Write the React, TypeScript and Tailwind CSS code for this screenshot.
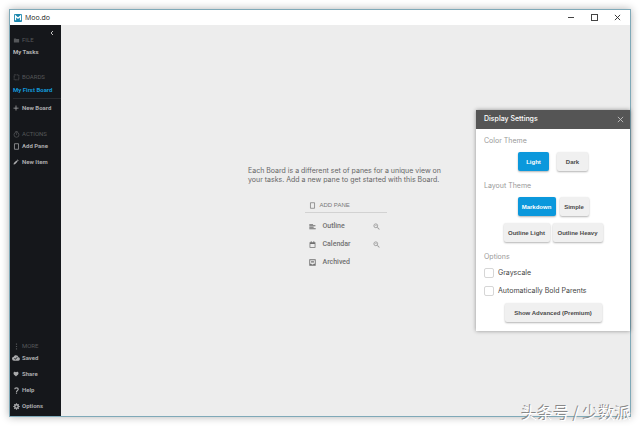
import type { ReactNode } from "react";

type IconProps = { className?: string };

const Svg = ({ className = "", children }: IconProps & { children: ReactNode }) => (
  <svg viewBox="0 0 24 24" aria-hidden="true" className={`shrink-0 ${className}`} fill="currentColor">
    {children}
  </svg>
);

const FolderIcon = ({ className }: IconProps) => (
  <Svg className={className}><path d="M3 5h7l2 2h9v12H3z" /></Svg>
);
const PaneIcon = ({ className }: IconProps) => (
  <Svg className={className}><path fill="none" stroke="currentColor" strokeWidth="2.5" d="M5 2.5h14v19H5z" /></Svg>
);
const BoardIcon = ({ className }: IconProps) => (
  <Svg className={className}>
    <path fill="none" stroke="currentColor" strokeWidth="2.5" strokeDasharray="6 2" d="M4 3h16v17H4z" />
  </Svg>
);
const PlusIcon = ({ className }: IconProps) => (
  <Svg className={className}><path d="M10.5 2h3v8.500H22v3h-8.500V22h-3v-8.500H2v-3h8.500z" /></Svg>
);
const ClockIcon = ({ className }: IconProps) => (
  <Svg className={className}>
    <circle cx="12" cy="13" r="8.500" fill="none" stroke="currentColor" strokeWidth="2.500" />
    <path d="M8 1h8v2H8zM11 7h2v7h-2z" />
  </Svg>
);
const PencilIcon = ({ className }: IconProps) => (
  <Svg className={className}><path d="M2 22l1.500-6L14 5.500l4.500 4.500L8 20.500zM15.500 4L18 1.500 22.500 6 20 8.500z" /></Svg>
);
const MoreIcon = ({ className }: IconProps) => (
  <Svg className={className}><path d="M10 2h4v4h-4zM10 10h4v4h-4zM10 18h4v4h-4z" /></Svg>
);
const CloudIcon = ({ className }: IconProps) => (
  <Svg className={className}>
    <path d="M19.350 10.040A7.490 7.490 0 0 0 12 4C9.110 4 6.600 5.640 5.350 8.040A6 6 0 0 0 6 20h13a5 5 0 0 0 .35-9.960zM10 17l-3.500-3.500 1.410-1.410L10 14.170l5.180-5.170 1.410 1.410z" />
  </Svg>
);
const HeartIcon = ({ className }: IconProps) => (
  <Svg className={className}>
    <path d="M12 21.500l-1.500-1.300C5 15.300 2 12.500 2 8.500 2 5.400 4.400 3 7.500 3c1.700 0 3.400.8 4.500 2.100C13.100 3.800 14.800 3 16.500 3 19.600 3 22 5.400 22 8.500c0 4-3 6.800-8.500 11.700z" />
  </Svg>
);
const HelpIcon = ({ className }: IconProps) => (
  <Svg className={className}>
    <path fill="none" stroke="currentColor" strokeWidth="4" d="M6 8c0-7 12-7 12 0 0 4-6 4-6 9" />
    <path d="M10 19h4v4h-4z" />
  </Svg>
);
const GearIcon = ({ className }: IconProps) => (
  <Svg className={className}>
    <circle cx="12" cy="12" r="6" fill="none" stroke="currentColor" strokeWidth="5" />
    <path d="M10 1h4v5h-4zM10 18h4v5h-4zM1 10h5v4H1zM18 10h5v4h-5zM3 6l3-3 3 3-3 3zM15 6l3-3 3 3-3 3zM3 18l3-3 3 3-3 3zM15 18l3-3 3 3-3 3z" />
  </Svg>
);
const OutlineIcon = ({ className }: IconProps) => (
  <Svg className={className}><path d="M1 3h13v3H1zM1 8h21v3H1zM1 13h15v3H1zM1 18h22v3H1z" /></Svg>
);
const CalendarIcon = ({ className }: IconProps) => (
  <Svg className={className}>
    <path fillRule="evenodd" d="M2 4h4V1h3v3h6V1h3v3h4v19H2zm2.500 6v10.500h15V10z" />
  </Svg>
);
const ArchiveIcon = ({ className }: IconProps) => (
  <Svg className={className}>
    <path fillRule="evenodd" d="M1 1h22v22H1zm3 3v12h4l2 3h4l2-3h4V4zM7 7h10v2H7zM7 11h10v2H7z" />
  </Svg>
);
const ZoomIcon = ({ className }: IconProps) => (
  <Svg className={className}>
    <circle cx="9.500" cy="9.500" r="6.500" fill="none" stroke="currentColor" strokeWidth="3" />
    <path d="M14 16l2-2 7 7-2 2zM6 8.500h7v2H6z" />
  </Svg>
);
const CloseIcon = ({ className }: IconProps) => (
  <Svg className={className}><path fill="none" stroke="currentColor" strokeWidth="3" d="M3 3l18 18M21 3L3 21" /></Svg>
);

function SideHeading({ icon, children }: { icon: ReactNode; children: ReactNode }) {
  return (
    <h2 className="flex h-3 items-center gap-[3px] text-[6px] leading-3 font-normal text-[#55575a]">
      <span className="flex w-[6px] justify-center">{icon}</span>
      {children}
    </h2>
  );
}

function SideItem({ icon, children }: { icon: ReactNode; children: ReactNode }) {
  return (
    <button type="button" className="flex h-3 items-center gap-[3px] text-[6px] leading-3 font-bold text-[#a9aaac]">
      <span className="flex w-[6px] justify-center">{icon}</span>
      {children}
    </button>
  );
}

function PaneOption({ icon, label, zoom }: { icon: ReactNode; label: string; zoom?: boolean }) {
  return (
    <li className="flex h-[18px] items-center pr-[7px] pl-1">
      <button
        type="button"
        className="flex flex-1 items-center gap-[7px] font-['Roboto',sans-serif] text-[7px] font-medium text-[#707070]"
      >
        {icon}
        {label}
      </button>
      {zoom && (
        <button type="button" aria-label={`Preview ${label}`} className="text-[#999]">
          <ZoomIcon className="size-[7px]" />
        </button>
      )}
    </li>
  );
}

function ThemeButton({ active, width, children }: { active?: boolean; width: string; children: ReactNode }) {
  const tone = active ? "bg-[#0b98dc] text-white" : "bg-[#f0f0f0] text-[#4a4a4a]";
  return (
    <button
      type="button"
      className={`h-[19px] rounded-xs text-[6px] leading-3 font-bold whitespace-nowrap shadow-[0_1px_2px_rgba(0,0,0,0.3)] ${tone} ${width}`}
    >
      {children}
    </button>
  );
}

function Option({ id, label }: { id: string; label: string }) {
  return (
    <div className="flex h-[18px] items-center gap-1">
      <input
        id={id}
        type="checkbox"
        className="size-[10px] shrink-0 appearance-none rounded-xs border border-[#d6d6d6] bg-white checked:bg-[#0b98dc]"
      />
      <label htmlFor={id} className="font-['Inter',sans-serif] text-[7px] leading-3 text-[#444]">{label}</label>
    </div>
  );
}

function SettingHeading({ children }: { children: ReactNode }) {
  return <h3 className="font-['Inter',sans-serif] text-[7px] leading-3 text-[#999]">{children}</h3>;
}

function Sidebar() {
  return (
    <nav className="flex w-[51px] shrink-0 flex-col bg-[#15171b] pt-1 pb-1 pl-[3px] font-['Roboto',sans-serif]">
      <div className="flex h-[17px] justify-between pr-[6px]">
        <div className="self-end">
          <SideHeading icon={<FolderIcon className="size-[7px]" />}>FILE</SideHeading>
        </div>
        <button type="button" aria-label="Collapse sidebar" className="self-start text-[#c0c0c0]">
          <svg viewBox="0 0 6 8" className="h-2 w-[6px]" fill="none" stroke="currentColor">
            <path d="M4 2L2 4 4 6" />
          </svg>
        </button>
      </div>
      <a href="#tasks" className="h-3 text-[6px] leading-3 font-bold text-[#b4b5b6]">My Tasks</a>

      <div className="mt-[13px] flex flex-col">
        <SideHeading icon={<BoardIcon className="size-[7px]" />}>BOARDS</SideHeading>
        <a href="#board" className="h-4 border-b border-[#292b2f] text-[6px] leading-[14px] font-bold text-[#1397d8]">
          My First Board
        </a>
        <div className="mt-[3px]">
          <SideItem icon={<PlusIcon className="size-[6px]" />}>New Board</SideItem>
        </div>
      </div>

      <div className="mt-[14px] flex flex-col">
        <SideHeading icon={<ClockIcon className="size-[7px]" />}>ACTIONS</SideHeading>
        <div className="flex flex-col gap-1">
          <SideItem icon={<PaneIcon className="size-[7px]" />}>Add Pane</SideItem>
          <SideItem icon={<PencilIcon className="size-[6px]" />}>New Item</SideItem>
        </div>
      </div>

      <div className="mt-auto flex flex-col">
        <SideHeading icon={<MoreIcon className="size-[7px]" />}>MORE</SideHeading>
        <div className="flex flex-col gap-1">
          <SideItem icon={<CloudIcon className="size-2" />}>Saved</SideItem>
          <SideItem icon={<HeartIcon className="size-[6px]" />}>Share</SideItem>
          <SideItem icon={<HelpIcon className="size-[7px]" />}>Help</SideItem>
          <SideItem icon={<GearIcon className="size-[7px]" />}>Options</SideItem>
        </div>
      </div>
    </nav>
  );
}

function DisplaySettings() {
  return (
    <section
      aria-label="Display Settings"
      className="absolute top-[85px] right-0 w-[154px] bg-white shadow-[0_0_4px_rgba(0,0,0,0.4)]"
    >
      <header className="flex h-[19px] items-center justify-between bg-[#555] pr-[6px] pl-2 text-white">
        <h2 className="font-['Inter',sans-serif] text-[7px] font-medium">Display Settings</h2>
        <button type="button" aria-label="Close" className="text-[#c4c4c4]">
          <CloseIcon className="size-[7px]" />
        </button>
      </header>
      <div className="px-2 pt-[6px] pb-[9px]">
        <SettingHeading>Color Theme</SettingHeading>
        <div className="mt-[5px] mb-[9px] flex justify-center gap-2">
          <ThemeButton active width="w-[31px]">Light</ThemeButton>
          <ThemeButton width="w-[31px]">Dark</ThemeButton>
        </div>
        <SettingHeading>Layout Theme</SettingHeading>
        <div className="mt-[5px] flex justify-center gap-1">
          <ThemeButton active width="w-[38px]">Markdown</ThemeButton>
          <ThemeButton width="w-[29px]">Simple</ThemeButton>
        </div>
        <div className="mt-[7px] mb-[9px] flex justify-center gap-[3px]">
          <ThemeButton width="w-[46px]">Outline Light</ThemeButton>
          <ThemeButton width="w-[50px]">Outline Heavy</ThemeButton>
        </div>
        <SettingHeading>Options</SettingHeading>
        <div className="mt-px">
          <Option id="grayscale" label="Grayscale" />
          <Option id="bold-parents" label="Automatically Bold Parents" />
        </div>
        <div className="mt-[3px] flex justify-center">
          <ThemeButton width="w-[97px]">Show Advanced (Premium)</ThemeButton>
        </div>
      </div>
    </section>
  );
}

export default function App() {
  return (
    <div className="relative flex h-screen bg-white p-[9px] font-['Liberation_Sans',Arial,sans-serif]">
      <div className="flex min-w-0 flex-1 flex-col border border-[#7fa9b8] bg-[#ededed] shadow-[0_0_8px_rgba(0,0,0,0.3)]">
        <header className="flex h-[15px] shrink-0 items-center bg-white pr-[9px] pl-1 text-[#222]">
          <svg viewBox="0 0 16 16" aria-hidden="true" className="size-2">
            <rect width="16" height="16" rx="2" fill="#1b87ae" />
            <path d="M3 12.500V4l5 4.500L13 4v8.500" fill="none" stroke="#fff" strokeWidth="2.500" />
          </svg>
          <h1 className="ml-[3px] flex-1 font-['Open_Sans','Noto_Sans',sans-serif] text-[7px] leading-3">Moo.do</h1>
          <div className="flex items-center gap-4">
            <button type="button" aria-label="Minimize" className="flex size-[7px] items-center">
              <span className="h-px w-[6px] bg-[#444]" />
            </button>
            <button type="button" aria-label="Maximize" className="size-[7px] p-px">
              <span className="block size-full outline outline-[#444]" />
            </button>
            <button type="button" aria-label="Close window" className="size-[7px]">
              <CloseIcon className="size-[7px]" />
            </button>
          </div>
        </header>
        <div className="relative flex min-h-0 flex-1">
          <Sidebar />
          <main className="flex min-w-0 flex-1 flex-col items-center pt-[141px]">
            <p className="w-[195px] font-['Inter',sans-serif] text-[7px] leading-[9px] text-[#666]">
              Each Board is a different set of panes for a unique view on your tasks. Add a new pane to get started with
              this Board.
            </p>
            <div className="mt-[15px] w-[82px]">
              <h2 className="flex h-[14px] items-center gap-1 border-b border-[#d2d2d2] pl-1 text-[6px] font-normal text-[#777]">
                <PaneIcon className="size-[7px]" />
                ADD PANE
              </h2>
              <ul className="mt-1">
                <PaneOption icon={<OutlineIcon className="size-[7px]" />} label="Outline" zoom />
                <PaneOption icon={<CalendarIcon className="size-[7px]" />} label="Calendar" zoom />
                <PaneOption icon={<ArchiveIcon className="size-[7px]" />} label="Archived" />
              </ul>
            </div>
          </main>
          <DisplaySettings />
        </div>
      </div>
      <p className="absolute right-[9px] bottom-[2px] font-['Noto_Sans_CJK_SC',sans-serif] text-[16px] leading-6 text-white [text-shadow:-1px_-1px_0_#888]">
        头条号 / 少数派
      </p>
    </div>
  );
}
